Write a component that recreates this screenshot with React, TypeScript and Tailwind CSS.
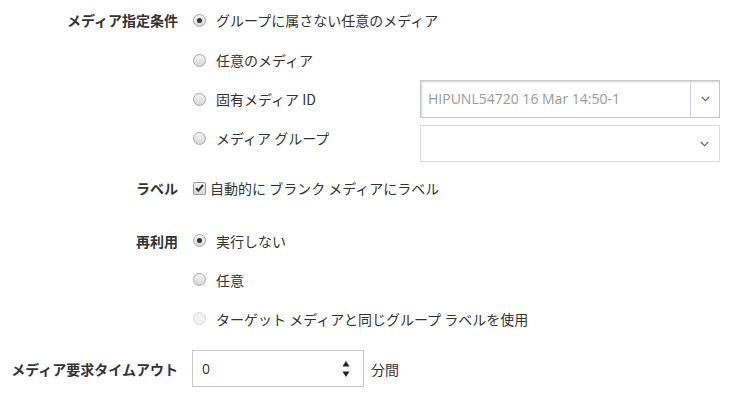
import React from "react";

const jp = { fontFamily: '"Noto Sans CJK JP", "Open Sans", sans-serif' };

const Radio = ({ checked, disabled }: { checked?: boolean; disabled?: boolean }) => (
  <span
    className={
      "flex h-[13px] w-[13px] shrink-0 items-center justify-center rounded-full border " +
      (disabled
        ? "border-[#d8d8d8] bg-[#f1f1f1]"
        : "border-[#a9a9a9] bg-gradient-to-b from-[#f4f4f4] to-[#d6d6d6]")
    }
  >
    {checked && <span className="h-[5px] w-[5px] rounded-full bg-[#333]" />}
  </span>
);

const Checkbox = () => (
  <span className="flex h-[13px] w-[13px] shrink-0 items-center justify-center rounded-[2px] border border-[#9a9a9a] bg-gradient-to-b from-[#f4f4f4] to-[#d8d8d8]">
    <svg width="9" height="8" viewBox="0 0 9 8">
      <path d="M1 4.2 L3.4 6.6 L8 1" fill="none" stroke="#333" strokeWidth="2" />
    </svg>
  </span>
);

const Chevron = () => (
  <svg width="9" height="6" viewBox="0 0 9 6">
    <path d="M0.8 1 L4.5 4.7 L8.2 1" fill="none" stroke="#666" strokeWidth="1.1" />
  </svg>
);

const Label = ({ children }: { children: React.ReactNode }) => (
  <div className="w-[178px] shrink-0 text-right text-[14px] font-bold text-[#333]">{children}</div>
);

const Option = ({
  checked,
  disabled,
  children,
}: {
  checked?: boolean;
  disabled?: boolean;
  children: React.ReactNode;
}) => (
  <div className="flex items-center gap-[10px] text-[14px] text-[#333]">
    <Radio checked={checked} disabled={disabled} />
    <span>{children}</span>
  </div>
);

export default function App() {
  return (
    <div className="h-[398px] w-[735px] bg-white leading-[20px]" style={jp}>
      {/* メディア指定条件 */}
      <div className="flex h-[40px] items-center">
        <Label>メディア指定条件</Label>
        <div className="ml-[15px]">
          <Option checked>グループに属さない任意のメディア</Option>
        </div>
      </div>
      <div className="flex h-[40px] items-center pl-[193px]">
        <Option>任意のメディア</Option>
      </div>
      <div className="flex h-[38px] items-center pl-[193px]">
        <div className="w-[227px]">
          <Option>固有メディア ID</Option>
        </div>
        <div className="flex h-[38px] w-[300px] border border-[#c8c8c8] bg-white shadow-[inset_1px_1px_2px_rgba(0,0,0,0.18)]">
          <div
            className="flex flex-1 items-center border-r border-[#c9d3e0] pl-[7px] text-[14px] text-[#9a9a9a]"
            style={{ fontFamily: '"Open Sans", sans-serif' }}
          >
            HIPUNL54720 16 Mar 14:50-1
          </div>
          <div className="flex w-[28px] items-center justify-center">
            <Chevron />
          </div>
        </div>
      </div>
      <div className="flex h-[44px] items-start pl-[193px]">
        <div className="w-[227px] pt-[10px]">
          <Option>メディア グループ</Option>
        </div>
        <div className="mt-[7px] flex h-[37px] w-[300px] items-center justify-end border border-[#dcdcdc] bg-white pr-[10px]">
          <Chevron />
        </div>
      </div>

      {/* ラベル */}
      <div className="mt-[6px] flex h-[40px] items-center">
        <Label>ラベル</Label>
        <div className="ml-[15px] flex items-center gap-[4px] text-[14px] text-[#333]">
          <Checkbox />
          <span>自動的に ブランク メディアにラベル</span>
        </div>
      </div>

      {/* 再利用 */}
      <div className="mt-[13px] flex h-[39px] items-center">
        <Label>再利用</Label>
        <div className="ml-[15px]">
          <Option checked>実行しない</Option>
        </div>
      </div>
      <div className="flex h-[39px] items-center pl-[193px]">
        <Option>任意</Option>
      </div>
      <div className="flex h-[39px] items-center pl-[193px]">
        <Option disabled>ターゲット メディアと同じグループ ラベルを使用</Option>
      </div>

      {/* タイムアウト */}
      <div className="mt-[12px] flex h-[37px] items-center">
        <Label>メディア要求タイムアウト</Label>
        <div className="ml-[14px] flex h-[37px] w-[172px] items-center justify-between border border-[#c8c8c8] pl-[9px] pr-[13px]">
          <span className="text-[14px] text-[#333]" style={{ fontFamily: '"Open Sans", sans-serif' }}>
            0
          </span>
          <svg width="8" height="20" viewBox="0 0 8 20">
            <path d="M4 2 L7.5 7.5 L0.5 7.5 Z" fill="#222" />
            <path d="M0.5 12.5 L7.5 12.5 L4 18 Z" fill="#222" />
          </svg>
        </div>
        <span className="ml-[7px] text-[14px] text-[#333]">分間</span>
      </div>
    </div>
  );
}
